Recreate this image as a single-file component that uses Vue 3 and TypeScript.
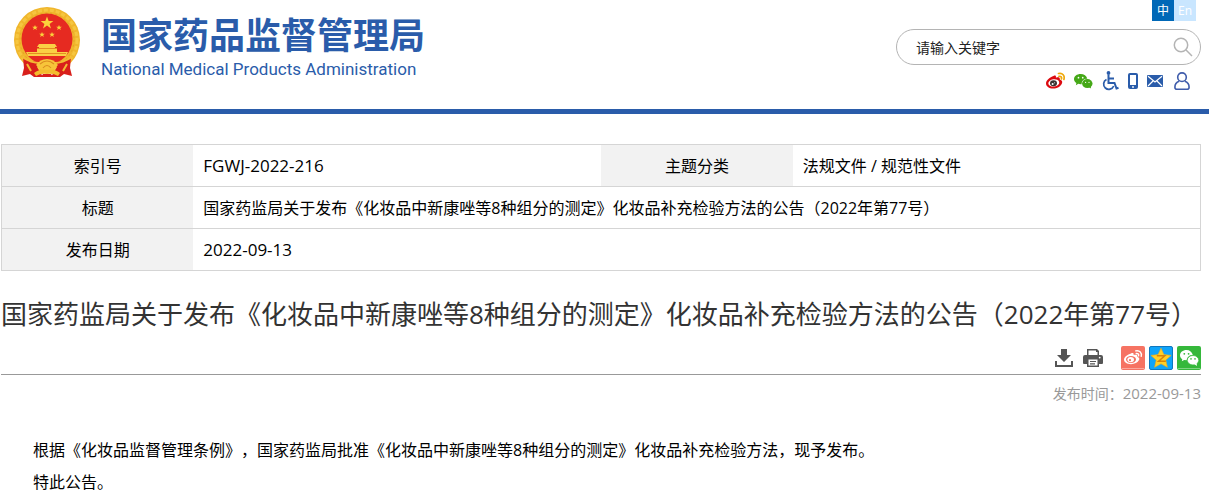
<script setup lang="ts">
import { ref } from 'vue'

const keyword = ref<string>('')
const title: string = '国家药监局关于发布《化妆品中新康唑等8种组分的测定》化妆品补充检验方法的公告（2022年第77号）'
const published: string = '2022-09-13'
const paragraphs: string[] = [
  '根据《化妆品监督管理条例》，国家药监局批准《化妆品中新康唑等8种组分的测定》化妆品补充检验方法，现予发布。',
  '特此公告。',
]
</script>

<template>
  <div class="page">
    <header class="header">
      <a class="brand" href="#">
        <svg class="emblem" viewBox="0 0 66 71" aria-hidden="true">
          <circle cx="33" cy="33" r="33" fill="#f0b62c" />
          <circle cx="33" cy="33" r="30" fill="none" stroke="#f6c640" stroke-width="3" stroke-dasharray="4 2" />
          <circle cx="33" cy="33" r="27" fill="none" stroke="#e5a326" stroke-width="1" stroke-dasharray="2 3" />
          <circle cx="33" cy="32" r="25.500" fill="#e62a21" />
          <path d="M33 9.500l1.700 4.500h4.700l-3.800 2.900 1.400 4.500-4-2.800-4 2.800 1.400-4.500-3.800-2.900h4.700z" fill="#fbd23c" />
          <path d="M21 18l.8 1.800h2l-1.600 1.200.6 2-1.800-1.200-1.800 1.200.6-2-1.600-1.200h2zM45 18l.8 1.800h2l-1.600 1.200.6 2-1.800-1.200-1.800 1.200.6-2-1.600-1.200h2zM28 25l.8 1.800h2l-1.600 1.200.6 2-1.800-1.200-1.800 1.200.6-2-1.600-1.200h2zM38 25l.8 1.800h2l-1.600 1.200.6 2-1.800-1.200-1.800 1.200.6-2-1.600-1.200h2z" fill="#fbd23c" />
          <path d="M25 37h16l2 3h-2v2h2v3h11l-2 4H14l-2-4h11v-3h2v-2h-2z" fill="#fad044" />
          <path d="M23 41.500h20M14 46.500h38" stroke="#e58e22" stroke-width="1" />
          <path d="M9 50q7 6 17 4l-3 6 6 10H20l-4-3-8 2 2-8zM57 50q-7 6-17 4l3 6-6 10h9l4-3 8 2-2-8z" fill="#d81f1b" />
          <path d="M8 50q9 6 18 6M58 50q-9 6-18 6M13 57l4 7M53 57l-4 7" fill="none" stroke="#f3bb34" stroke-width="2" />
          <path d="M22 58q4-6 11-6t11 6l-5 5H27z" fill="#f7c53a" />
          <path d="M26 57q7-6 14 0M29 61q4-5 8 0" fill="none" stroke="#db8c20" stroke-width="1.200" />
          <path d="M20 66q6-5 13-3q7-2 13 3l-2 3q-5-3-11-2q-6-1-11 2z" fill="#f3bc2d" />
          <path d="M29 67h8l2 3H27z" fill="#d81f1b" />
        </svg>
        <span class="brand-text">
          <span class="brand-cn">国家药品监督管理局</span>
          <span class="brand-en">National Medical Products Administration</span>
        </span>
      </a>

      <div class="tools">
        <nav class="langs" aria-label="语言">
          <a class="lang lang-on" href="#">中</a>
          <a class="lang" href="#">En</a>
        </nav>
        <form class="search" @submit.prevent>
          <input v-model="keyword" type="text" placeholder="请输入关键字" aria-label="请输入关键字" />
          <button type="submit" aria-label="搜索">
            <svg width="20" height="20" viewBox="0 0 20 20" fill="none" stroke="#b4b4b4" stroke-width="1.500">
              <circle cx="8" cy="8" r="6.700" />
              <path d="M12.800 12.800 19 19" />
            </svg>
          </button>
        </form>
        <nav class="links" aria-label="快捷入口">
          <a href="#" aria-label="微博">
            <svg width="19" height="18" viewBox="0 0 19 18">
              <path d="M7.500 4C9 3.200 10.400 3.600 9.900 5.700C12 4.900 14.200 5 13.800 7.500C16 8.200 16.700 9.500 16 11.300C14.600 14.800 10.800 16.700 7 16.600C3 16.500 0 14.500 0 11.300C0 8.500 4 5 7.500 4Z" fill="#dc0a10" />
              <ellipse cx="7.800" cy="10.900" rx="5.500" ry="3.600" fill="#fff" transform="rotate(-8 7.800 10.900)" />
              <ellipse cx="7.500" cy="11.200" rx="3.500" ry="3" fill="#3c3433" />
              <circle cx="6.600" cy="12" r="1" fill="#fff" />
              <circle cx="8.600" cy="10.700" r=".5" fill="#fff" />
              <path d="M12.500 1.500C16.600.5 19 3.700 17.900 7.400M13 4.300C15 4 16 5.200 15.400 6.900" fill="none" stroke="#efa90c" stroke-width="1.700" stroke-linecap="round" />
            </svg>
          </a>
          <a href="#" aria-label="微信">
            <svg width="19" height="18" viewBox="0 0 20 18">
              <path d="M7 1.500C3 1.500 0 3.800 0 7c0 1.800 1 3.200 2.500 4.200L2 13.400 4.500 12c1 .3 2.500.4 3.500.3C8 8.600 10.600 6.500 14 6.500 13.300 3.500 10.500 1.500 7 1.500Z" fill="#45a817" />
              <ellipse cx="14" cy="11.700" rx="5.500" ry="4.700" fill="#45a817" />
              <path d="m15 15 3 2-.5-3z" fill="#45a817" />
              <g fill="#fff"><circle cx="4.700" cy="5.500" r=".9" /><circle cx="9.200" cy="5.500" r=".9" /><circle cx="12.200" cy="10.400" r=".7" /><circle cx="15.800" cy="10.400" r=".7" /></g>
            </svg>
          </a>
          <a href="#" aria-label="无障碍">
            <svg width="17" height="20" viewBox="0 0 17 20" fill="none" stroke="#2a5caa" stroke-width="2">
              <circle cx="6.500" cy="2" r="1.900" fill="#2a5caa" stroke="none" />
              <path d="M6.500 4v8h6l2 5.500 2-.8M6.500 7.500H12" />
              <path d="M4.500 8.500A5.200 5.200 0 1 0 11.700 15" stroke-width="1.700" />
            </svg>
          </a>
          <a href="#" aria-label="移动版">
            <svg width="10" height="16" viewBox="0 0 10 16">
              <rect width="10" height="16" rx="2" fill="#2a5caa" />
              <rect x="2" y="2" width="6" height="10" fill="#fff" />
              <circle cx="5" cy="14" r=".9" fill="#fff" />
            </svg>
          </a>
          <a href="#" aria-label="邮箱">
            <svg width="16" height="12" viewBox="0 0 16 12">
              <rect width="16" height="12" rx="1" fill="#2a5caa" />
              <path d="M1 1.200 8 7 15 1.200M1 11l5-5M15 11l-5-5" fill="none" stroke="#fff" stroke-width="1.200" />
            </svg>
          </a>
          <a href="#" aria-label="个人中心">
            <svg width="16" height="18" viewBox="0 0 16 18" fill="none" stroke="#3f5cab" stroke-width="1.600">
              <circle cx="8" cy="5.200" r="4.300" />
              <path d="M5.200 9.300C2.500 10.200.9 12.500.9 15.200c0 1.300.7 2 2 2h10.200c1.300 0 2-.7 2-2 0-2.700-1.600-5-4.300-5.900" />
            </svg>
          </a>
        </nav>
      </div>
    </header>

    <main class="content">
      <table class="meta">
        <colgroup>
          <col class="col-label" />
          <col class="col-value" />
          <col class="col-label" />
          <col class="col-value" />
        </colgroup>
        <tbody>
          <tr>
            <th scope="row">索引号</th>
            <td class="latin">FGWJ-2022-216</td>
            <th scope="row">主题分类</th>
            <td>法规文件 / 规范性文件</td>
          </tr>
          <tr>
            <th scope="row">标题</th>
            <td colspan="3">{{ title }}</td>
          </tr>
          <tr>
            <th scope="row">发布日期</th>
            <td class="latin" colspan="3">{{ published }}</td>
          </tr>
        </tbody>
      </table>

      <article>
        <h1>{{ title }}</h1>
        <div class="actions">
          <button type="button" aria-label="下载">
            <svg width="18" height="18" viewBox="0 0 18 18" fill="#555">
              <path d="M6 0h6v6h4L9 13 2 6h4zM0 12h2v4h14v-4h2v6H0z" />
            </svg>
          </button>
          <button class="print" type="button" aria-label="打印">
            <svg width="20" height="18" viewBox="0 0 20 18">
              <path d="M4 0h10l2 2v4h2q2 0 2 2v6q0 1-1 1h-3v3H4v-3H1q-1 0-1-1V8q0-2 2-2h2z" fill="#555" />
              <path d="M5.500 1.500h7.500v1.500h1.500V6h-9zM5.500 10.500h9v6h-9z" fill="#fff" />
              <path d="M7 12.500h6M7 14.800h5" stroke="#555" stroke-width="1.200" />
              <circle cx="16.700" cy="8.600" r=".9" fill="#fff" />
            </svg>
          </button>
          <a href="#" aria-label="分享到微博">
            <svg width="24" height="24" viewBox="0 0 24 24">
              <rect width="24" height="24" rx="2" fill="#f67363" />
              <path d="M1 22.500h22" stroke="#fba79d" />
              <path d="M10 7.500C11.700 6.600 13 7.200 12.600 9c2-.7 4.200-.5 3.800 1.700 2 .7 2.300 2 1.600 3.400C16.900 16.700 13.600 18.200 10 18.200c-4 0-7-1.800-7-4.600C3 11.200 6.500 8.400 10 7.500Z" fill="#fff" />
              <ellipse cx="10" cy="13.500" rx="5" ry="3.400" fill="#f67363" />
              <ellipse cx="9.700" cy="13.600" rx="3.300" ry="2.700" fill="#fff" />
              <circle cx="9" cy="14.200" r="1.100" fill="#f67363" />
              <path d="M14.700 4.900c4-.9 6.500 2 5.500 5.500M15.200 7.500c1.900-.3 2.800.8 2.400 2.400" fill="none" stroke="#fff" stroke-width="1.400" stroke-linecap="round" />
            </svg>
          </a>
          <a href="#" aria-label="分享到QQ空间">
            <svg width="24" height="24" viewBox="0 0 24 24">
              <rect x=".5" y=".5" width="23" height="23" rx="1.500" fill="#0fa4fa" stroke="#1077bd" />
              <path d="m12 2.200 2.900 6.400 7.200.8-5.300 4.700 1.600 7.200L12 17.800l-6.400 3.500 1.600-7.200L1.900 9.400l7.200-.8z" fill="#ffcf28" stroke="#f1ab16" stroke-width=".6" />
              <path d="M7.800 9.800h8l-6.200 5.500h7.200" fill="none" stroke="#d78408" stroke-width="1.500" />
            </svg>
          </a>
          <a href="#" aria-label="分享到微信">
            <svg width="24" height="24" viewBox="0 0 24 24">
              <rect width="24" height="24" rx="2" fill="#35b83b" />
              <path d="M1 22.500h22" stroke="#7fd382" />
              <path d="M9.500 4C5.800 4 3 6.300 3 9.200c0 1.700.9 3 2.300 4L4.800 15.300 7.200 14l2.500.3C9.900 11 12.500 9 15.800 9 15.100 6 12.700 4 9.500 4Z" fill="#fff" />
              <ellipse cx="16" cy="14.200" rx="5.700" ry="4.700" fill="#fff" stroke="#35b83b" stroke-width=".6" />
              <path d="m17 18 3 2-.4-3z" fill="#fff" />
              <g fill="#35b83b"><circle cx="7.300" cy="7.800" r=".9" /><circle cx="11.600" cy="7.800" r=".9" /><circle cx="14" cy="12.900" r=".8" /><circle cx="18" cy="12.900" r=".8" /></g>
            </svg>
          </a>
        </div>
        <p class="time">发布时间：<time :datetime="published">{{ published }}</time></p>
        <div class="body">
          <p v-for="text in paragraphs" :key="text">{{ text }}</p>
        </div>
      </article>
    </main>
  </div>
</template>

<style>
body {
  margin: 0;
  background: #fff;
}
</style>

<style scoped>
.page {
  font-family: "Open Sans", "Noto Sans CJK SC", sans-serif;
  font-size: 16px;
  color: #000;
  text-spacing-trim: space-all;
}
a {
  text-decoration: none;
}
svg {
  display: block;
}
.header {
  display: flex;
  justify-content: space-between;
  align-items: flex-start;
  min-height: 109px;
  padding: 0 8px 0 14px;
  border-bottom: 5px solid #2a5caa;
}
.brand {
  display: flex;
  gap: 21px;
  padding-top: 7px;
  color: #2a5caa;
}
.emblem {
  width: 66px;
  height: 71px;
}
.brand-text {
  display: flex;
  flex-direction: column;
}
.brand-cn {
  font: 700 36px/52px "Noto Sans CJK SC", sans-serif;
}
.brand-en {
  font: 400 17px/20px Roboto, sans-serif;
}
.tools {
  width: 305px;
}
.langs {
  display: flex;
  justify-content: flex-end;
  padding-right: 5px;
}
.lang {
  width: 22px;
  font-size: 12px;
  line-height: 21px;
  text-align: center;
  color: #fff;
  background: #c9e6ff;
}
.lang-on {
  background: #0068b7;
}
.search {
  display: flex;
  align-items: center;
  box-sizing: border-box;
  height: 36px;
  margin-top: 8px;
  padding: 0 7px 0 19px;
  border: 1px solid #b4b4b4;
  border-radius: 18px;
}
.search input {
  flex: 1;
  min-width: 0;
  padding: 0;
  border: 0;
  outline: 0;
  background: none;
  font: inherit;
  font-size: 14px;
  color: #222;
}
.search input::placeholder {
  color: #222;
  opacity: 1;
}
button {
  padding: 0;
  border: 0;
  background: none;
  cursor: pointer;
}
.links {
  display: flex;
  justify-content: flex-end;
  align-items: center;
  gap: 9px;
  margin-top: 6px;
  padding-right: 11px;
}
.links a:last-child {
  margin-left: 2px;
}
.content {
  padding: 30px 8px 0 1px;
}
.meta {
  width: 100%;
  table-layout: fixed;
  border-collapse: collapse;
  border: 1px solid #d5d5d5;
}
.col-label {
  width: 16%;
}
.col-value {
  width: 34%;
}
.meta tr {
  height: 42px;
  border-bottom: 1px solid #d5d5d5;
}
.meta th,
.meta td {
  padding: 0 10px;
  font-weight: 400;
  line-height: 24px;
}
.meta th {
  background: #f2f2f2;
  text-align: center;
}
.meta td {
  text-align: left;
}
.meta .latin {
  font-size: 17px;
}
h1 {
  margin: 23px 0 0;
  font-size: 26px;
  line-height: 40px;
  font-weight: 400;
  color: #333;
}
.actions {
  display: flex;
  justify-content: flex-end;
  align-items: center;
  gap: 4px;
  margin-top: 12px;
  padding-bottom: 4px;
  border-bottom: 1px solid #999;
}
.print {
  margin: 0 14px 0 6px;
}
.time {
  margin: 8px 0 0;
  font-size: 14px;
  line-height: 20px;
  text-align: right;
  color: #999;
}
.time time {
  font-size: 15px;
}
.body {
  margin-top: 30px;
  line-height: 32px;
}
.body p {
  margin: 0;
  text-indent: 2em;
}
</style>
